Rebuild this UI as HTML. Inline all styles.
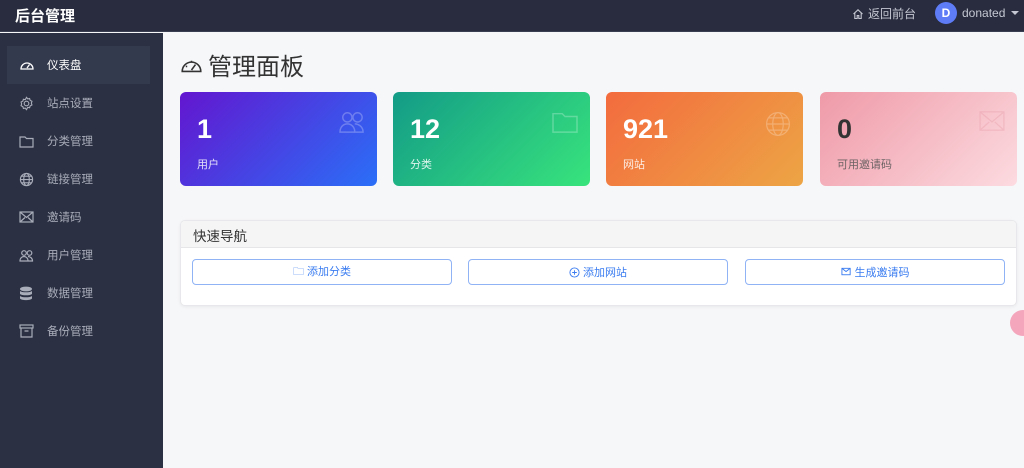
<!DOCTYPE html>
<html><head><meta charset="utf-8"><style>
*{box-sizing:border-box;margin:0;padding:0}
body{width:1024px;height:468px;overflow:hidden;background:#f6f7f9;font-family:"Liberation Sans","Noto Sans CJK SC",sans-serif;position:relative}
.top{position:absolute;left:0;top:0;width:1024px;height:32px;background:#282c3e;border-bottom:1px solid #3a3f52}
.logo{position:absolute;left:15px;top:5px;color:#fff;font-size:15px;font-weight:bold}
.back{position:absolute;left:852px;top:5px;color:#c5c8d2;font-size:12px;display:flex;align-items:center;gap:4px}
.av{position:absolute;left:935px;top:2px;width:22px;height:22px;border-radius:50%;background:#5f7cf7;color:#fff;font-size:12px;font-weight:bold;text-align:center;line-height:22px}
.user{position:absolute;left:962px;top:6px;color:#c5c8d2;font-size:12px}
.caret{position:absolute;left:1011px;top:11px;border:4px solid transparent;border-top:4px solid #c5c8d2}
.side{position:absolute;left:0;top:33px;width:163px;height:435px;background:#2b3042}
.item{position:absolute;left:7px;width:143px;height:38px;display:flex;align-items:center;color:#a9adba;font-size:11.5px}
.item svg{position:absolute;left:12px}
.item span{position:absolute;left:40px}
.item.act{background:#343a4d;color:#fff}
.col{position:absolute;left:144px;top:8px;color:#8c90a0;font-size:13px}
h1{position:absolute;left:180px;top:47px;font-size:24px;font-weight:normal;color:#333;display:flex;align-items:center;gap:5px}
.card{position:absolute;top:92px;width:197px;height:94px;border-radius:6px;color:#fff}
.card b{position:absolute;left:17px;top:22px;font-size:27px}
.card i{position:absolute;left:17px;top:64px;font-size:11px;font-style:normal;opacity:.85}
.card svg{position:absolute;right:11px;top:18px;opacity:.25}
.qn{position:absolute;left:180px;top:220px;width:837px;height:86px;background:#fff;border:1px solid #e8e8ec;border-radius:5px;box-shadow:0 1px 3px rgba(0,0,0,.06);overflow:hidden}
.qh{height:27px;background:#f5f5f6;border-bottom:1px solid #e6e6e8;font-size:13.5px;color:#333;padding:4px 0 0 12px}
.btn{position:absolute;top:38px;width:260px;height:26px;border:1px solid #8fb3f5;border-radius:4px;color:#3a7cf0;font-size:11px;display:flex;align-items:center;justify-content:center;gap:3px}
</style></head><body>
<div class="top">
<div class="logo">后台管理</div>
<div class="back"><svg width="12" height="12" viewBox="0 0 12 12" fill="none" stroke="#c5c8d2" stroke-width="1.1"><path d="M1.5 6L6 1.8 10.5 6M2.8 5v5.5h2.4V7.5h1.6v3h2.4V5"/></svg>返回前台</div>
<div class="av">D</div><div class="user">donated</div><div class="caret"></div>
</div>
<div class="side">
<div class="col">‹</div>
<div class="item act" style="top:13px"><svg width="16" height="14" viewBox="0 0 16 14" fill="none" stroke="#fff" stroke-width="1.3"><path d="M2 11a6 6 0 1 1 12 0z"/><path d="M8 10l2.5-3.5"/></svg><span>仪表盘</span></div>
<div class="item" style="top:51px"><svg width="15" height="15" viewBox="0 0 16 16" fill="none" stroke="#a9adba" stroke-width="1.2"><circle cx="8" cy="8" r="2.5"/><path d="M8 1.5l1.3 1.6 2-.4.6 2 1.9.9-.6 2 .6 2-1.9.9-.6 2-2-.4L8 14.5l-1.3-1.6-2 .4-.6-2-1.9-.9.6-2-.6-2 1.9-.9.6-2 2 .4z"/></svg><span>站点设置</span></div>
<div class="item" style="top:89px"><svg width="15" height="13" viewBox="0 0 15 13" fill="none" stroke="#a9adba" stroke-width="1.2"><path d="M1 2h5l1.5 1.5H14v8.5H1z"/></svg><span>分类管理</span></div>
<div class="item" style="top:127px"><svg width="15" height="15" viewBox="0 0 16 16" fill="none" stroke="#a9adba" stroke-width="1.2"><circle cx="8" cy="8" r="6.5"/><ellipse cx="8" cy="8" rx="3" ry="6.5"/><path d="M1.5 8h13M2.5 4.5h11M2.5 11.5h11"/></svg><span>链接管理</span></div>
<div class="item" style="top:165px"><svg width="15" height="12" viewBox="0 0 15 12" fill="none" stroke="#a9adba" stroke-width="1.2"><rect x="1" y="1" width="13" height="10"/><path d="M1 1l6.5 5.5L14 1M1 11l5-4.5M14 11l-5-4.5"/></svg><span>邀请码</span></div>
<div class="item" style="top:203px"><svg width="15" height="13" viewBox="0 0 15 13" fill="none" stroke="#a9adba" stroke-width="1.2"><circle cx="5" cy="4" r="2.3"/><circle cx="10.5" cy="4" r="2.3"/><path d="M1 12c0-3 2-4.5 4-4.5s4 1.5 4 4.5zM9 7.5c2 0 4.5 1.5 4.5 4.5H9"/></svg><span>用户管理</span></div>
<div class="item" style="top:241px"><svg width="14" height="15" viewBox="0 0 14 15" fill="#a9adba"><ellipse cx="7" cy="3" rx="6" ry="2.4"/><path d="M1 5c1.5 1.7 10.5 1.7 12 0v3c-1.5 1.7-10.5 1.7-12 0zM1 10c1.5 1.7 10.5 1.7 12 0v2.5c-1.5 2.2-10.5 2.2-12 0z"/></svg><span>数据管理</span></div>
<div class="item" style="top:279px"><svg width="15" height="14" viewBox="0 0 15 14" fill="none" stroke="#a9adba" stroke-width="1.2"><rect x="1" y="1" width="13" height="3"/><path d="M2 4v9h11V4M5.5 7h4"/></svg><span>备份管理</span></div>
</div>
<h1><svg width="23" height="20" viewBox="0 0 16 14" fill="none" stroke="#333" stroke-width="1.1"><path d="M1.5 11.5a6.5 6.5 0 1 1 13 0z"/><path d="M8 10.5l2.8-3.8M4 8h1M8 4v1"/></svg>管理面板</h1>
<div class="card" style="left:180px;background:linear-gradient(135deg,#6316cf,#2a6ff7)"><b>1</b><i>用户</i><svg width="28" height="24" viewBox="0 0 15 13" fill="none" stroke="#fff" stroke-width=".8"><circle cx="5" cy="4" r="2.5"/><circle cx="10.5" cy="4" r="2.5"/><path d="M1 12c0-3 2-4.5 4-4.5s4 1.5 4 4.5zM9 7.5c2 0 4.5 1.5 4.5 4.5H9"/></svg></div>
<div class="card" style="left:393px;background:linear-gradient(135deg,#139b87,#38e47c)"><b>12</b><i>分类</i><svg width="28" height="24" viewBox="0 0 15 13" fill="none" stroke="#fff" stroke-width=".8"><path d="M1 2h5l1.5 1.5H14v8.5H1z"/></svg></div>
<div class="card" style="left:606px;background:linear-gradient(135deg,#f36b3e,#eda545)"><b>921</b><i>网站</i><svg width="28" height="28" viewBox="0 0 16 16" fill="none" stroke="#fff" stroke-width=".7"><circle cx="8" cy="8" r="6.5"/><ellipse cx="8" cy="8" rx="3" ry="6.5"/><path d="M1.5 8h13M2.5 4.5h11M2.5 11.5h11"/></svg></div>
<div class="card" style="left:820px;background:linear-gradient(135deg,#ef9aa8,#fcdbe0);color:#333"><b>0</b><i style="color:#555">可用邀请码</i><svg width="28" height="22" viewBox="0 0 15 12" fill="none" stroke="#e08898" stroke-width=".7"><rect x="1" y="1" width="13" height="10"/><path d="M1 1l6.5 5.5L14 1M1 11l5-4.5M14 11l-5-4.5"/></svg></div>
<div class="qn"><div class="qh">快速导航</div>
<div class="btn" style="left:11px">🗀 添加分类</div>
<div class="btn" style="left:287px"><svg width="11" height="11" viewBox="0 0 12 12" fill="none" stroke="#3a7cf0"><circle cx="6" cy="6" r="5"/><path d="M6 3.5v5M3.5 6h5"/></svg>添加网站</div>
<div class="btn" style="left:564px"><svg width="11" height="10" viewBox="0 0 12 10" fill="none" stroke="#3a7cf0"><rect x="1" y="1" width="9" height="7"/><path d="M1 1l4.5 3.5L10 1"/></svg>生成邀请码</div>
</div>
<div style="position:absolute;left:1010px;top:310px;width:26px;height:26px;border-radius:50%;background:#f4a6bd"></div>
</body></html>
